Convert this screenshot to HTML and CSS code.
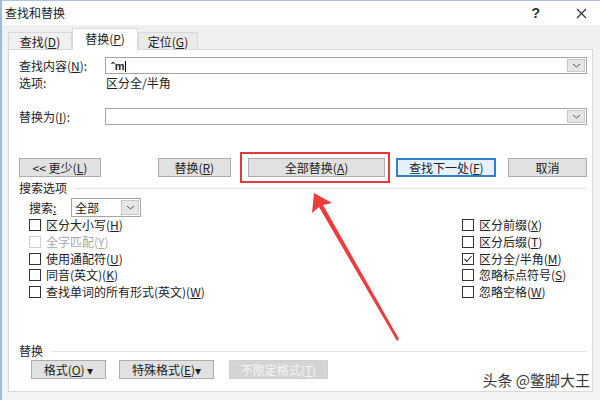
FILE: index.html
```html
<!DOCTYPE html>
<html lang="zh">

<head>
    <meta charset="UTF-8">
    <title>查找和替换</title>
    <link rel="stylesheet" href="styles.css">
</head>

<body>
    <div class="window">
        <div class="titlebar">
            <span class="title">查找和替换</span>
            <span class="help">?</span>
            <svg class="close" width="11" height="11" viewBox="0 0 11 11">
                <path d="M1 1L10 10M10 1L1 10" stroke="#333" stroke-width="1.2" fill="none" />
            </svg>
        </div>

        <div class="tabs">
            <div class="tab">查找(<u>D</u>)</div>
            <div class="tab active">替换(<u>P</u>)</div>
            <div class="tab">定位(<u>G</u>)</div>
        </div>

        <div class="panel">
            <div class="field-row">
                <span class="field-label">查找内容(<u>N</u>):</span>
                <div class="combo">
                    <span class="combo-text">ˆm<span class="caret"></span></span>
                    <span class="drop"><svg width="9" height="5" viewBox="0 0 9 5"><path d="M1 1L4.5 4L8 1" stroke="#555" fill="none" /></svg></span>
                </div>
            </div>
            <div class="options-row">
                <span class="field-label">选项:</span>
                <span>区分全/半角</span>
            </div>
            <div class="field-row replace-row">
                <span class="field-label">替换为(<u>I</u>):</span>
                <div class="combo">
                    <span class="combo-text"></span>
                    <span class="drop"><svg width="9" height="5" viewBox="0 0 9 5"><path d="M1 1L4.5 4L8 1" stroke="#555" fill="none" /></svg></span>
                </div>
            </div>

            <div class="btn-row">
                <button class="btn btn-less">&lt;&lt; 更少(<u>L</u>)</button>
                <button class="btn btn-replace">替换(<u>R</u>)</button>
                <button class="btn btn-all">全部替换(<u>A</u>)</button>
                <button class="btn btn-next">查找下一处(<u>F</u>)</button>
                <button class="btn btn-cancel">取消</button>
            </div>

            <div class="group-label"><span>搜索选项</span></div>

            <div class="search-row">
                <span class="search-label">搜索<u>:</u></span>
                <div class="select">
                    <span class="select-text">全部</span>
                    <span class="drop"><svg width="9" height="5" viewBox="0 0 9 5"><path d="M1 1L4.5 4L8 1" stroke="#555" fill="none" /></svg></span>
                </div>
            </div>

            <div class="checks">
                <div class="check-col">
                    <div class="check"><span class="box"></span>区分大小写(<u>H</u>)</div>
                    <div class="check disabled"><span class="box"></span>全字匹配(<u>Y</u>)</div>
                    <div class="check"><span class="box"></span>使用通配符(<u>U</u>)</div>
                    <div class="check"><span class="box"></span>同音(英文)(<u>K</u>)</div>
                    <div class="check"><span class="box"></span>查找单词的所有形式(英文)(<u>W</u>)</div>
                </div>
                <div class="check-col">
                    <div class="check"><span class="box"></span>区分前缀(<u>X</u>)</div>
                    <div class="check"><span class="box"></span>区分后缀(<u>T</u>)</div>
                    <div class="check"><span class="box"><svg width="10" height="10" viewBox="0 0 10 10"><path d="M1.5 5L4 7.5L8.5 2" stroke="#333" stroke-width="1.1" fill="none" /></svg></span>区分全/半角(<u>M</u>)</div>
                    <div class="check"><span class="box"></span>忽略标点符号(<u>S</u>)</div>
                    <div class="check"><span class="box"></span>忽略空格(<u>W</u>)</div>
                </div>
            </div>

            <div class="group-label bottom-group"><span>替换</span></div>

            <div class="btn-row format-row">
                <button class="btn btn-format">格式(<u>O</u>) ▾</button>
                <button class="btn btn-special">特殊格式(<u>E</u>)▾</button>
                <button class="btn btn-nolimit" disabled>不限定格式(<u>T</u>)</button>
            </div>
        </div>

        <svg class="arrow" width="600" height="400" viewBox="0 0 600 400">
            <polygon points="314,193 332,203 323,205 399,339 397,341 319,207 312,213" fill="#ef3b3b" />
        </svg>

        <div class="watermark">头条 @鳖脚大王</div>
    </div>
</body>

</html>
```

FILE: styles.css
```css
body {
    margin: 0;
    font-family: "Noto Sans CJK SC", "Liberation Sans", sans-serif;
    font-size: 12px;
    color: #222;
    background-color: #f0f0f0;
}

.window {
    position: relative;
    width: 598px;
    height: 400px;
    border-left: 2px solid #9fbadb;
    background-color: #f3f3f3;
    overflow: hidden;
}

.titlebar {
    height: 25px;
    display: flex;
    align-items: center;
    background-color: #fff;
    border-top: 1px solid #a9c4e4;
    box-sizing: border-box;
    padding-left: 3px;
}

.titlebar .title {
    flex: 1;
    line-height: 14px;
}

.titlebar .help {
    font-family: "Liberation Sans", sans-serif;
    font-size: 14px;
    font-weight: bold;
    color: #333;
    margin-right: 36px;
}

.titlebar .close {
    margin-right: 13px;
}

.tabs {
    height: 24px;
    display: flex;
    align-items: flex-end;
    padding-left: 6px;
    background-color: #f0f0f0;
}

.tab {
    height: 17px;
    line-height: 17px;
    text-align: center;
    border: 1px solid #d9d9d9;
    border-bottom: none;
    background-color: #f0f0f0;
    box-sizing: border-box;
    width: 64px;
}

.tab.active {
    height: 22px;
    line-height: 20px;
    width: 66px;
    background-color: #fff;
    margin-bottom: -1px;
    position: relative;
    z-index: 1;
}

.tab:last-child {
    width: 60px;
    background-color: #eaeaea;
}

.panel {
    height: 343px;
    margin: 0 7px 0 6px;
    border: 1px solid #d9d9d9;
    background-color: #fff;
    box-sizing: border-box;
    padding: 7px 5px 0 10px;
}

u {
    text-decoration: underline;
    text-underline-offset: 1px;
}

.field-row {
    display: flex;
    align-items: center;
    height: 17px;
}

.field-label {
    width: 86px;
    line-height: 14px;
}

.combo {
    flex: 1;
    height: 17px;
    border: 1px solid #a5a5a5;
    box-sizing: border-box;
    display: flex;
    align-items: center;
}

.combo-text {
    flex: 1;
    padding-left: 5px;
    line-height: 14px;
    font-family: "Liberation Sans", sans-serif;
    font-size: 11px;
    font-weight: bold;
}

.caret {
    display: inline-block;
    width: 1px;
    height: 11px;
    background-color: #000;
    vertical-align: middle;
    margin-left: 1px;
}

.drop {
    width: 18px;
    height: 13px;
    margin-right: 1px;
    background-color: #e6e6e6;
    border: 1px solid #c8c8c8;
    box-sizing: border-box;
    display: flex;
    align-items: center;
    justify-content: center;
}

.options-row {
    display: flex;
    align-items: center;
    height: 14px;
    margin-top: 2px;
    line-height: 14px;
}

.options-row .field-label {
    width: 87px;
}

.replace-row {
    margin-top: 18px;
}

.btn-row {
    display: flex;
    margin-top: 33px;
}

.btn {
    height: 19px;
    padding: 0;
    border: 1px solid #adadad;
    background-color: #e1e1e1;
    font-family: "Noto Sans CJK SC", "Liberation Sans", sans-serif;
    font-size: 12px;
    line-height: 16px;
    color: #222;
    box-sizing: border-box;
}

.btn-less {
    width: 82px;
}

.btn-replace {
    width: 73px;
    margin-left: 57px;
}

.btn-all {
    position: relative;
    width: 138px;
    margin-left: 17px;
}

.btn-all::after {
    content: "";
    position: absolute;
    top: -7px;
    left: -9px;
    right: -6px;
    bottom: -7px;
    border: 2px solid #e23a3f;
}

.btn-next {
    width: 100px;
    margin-left: 11px;
    border: 2px solid #2f7fd0;
    background-color: #e5f1fb;
}

.btn-cancel {
    width: 79px;
    margin-left: 12px;
}

.group-label {
    display: flex;
    align-items: center;
    height: 14px;
    margin-top: 4px;
    line-height: 14px;
}

.group-label::after {
    content: "";
    flex: 1;
    height: 1px;
    margin: 0 0 0 8px;
    background-color: #e3e3e3;
}

.search-row {
    display: flex;
    align-items: center;
    height: 19px;
    margin-top: 3px;
    padding-left: 10px;
}

.search-label {
    width: 42px;
    line-height: 14px;
}

.select {
    width: 70px;
    height: 19px;
    border: 1px solid #a5a5a5;
    box-sizing: border-box;
    display: flex;
    align-items: center;
}

.select-text {
    flex: 1;
    padding-left: 3px;
    line-height: 14px;
}

.select .drop {
    height: 15px;
}

.checks {
    display: grid;
    grid-template-columns: 433px auto;
    padding-left: 10px;
}

.check {
    display: flex;
    align-items: center;
    height: 16.7px;
    line-height: 14px;
}

.box {
    width: 12px;
    height: 12px;
    border: 1px solid #333;
    box-sizing: border-box;
    margin-right: 5px;
    display: flex;
    align-items: center;
    justify-content: center;
    background-color: #fff;
}

.check.disabled {
    color: #a8a8a8;
}

.check.disabled .box {
    border-color: #cfcfcf;
}

.bottom-group {
    margin-top: 44px;
}

.format-row {
    margin-top: 2px;
    padding-left: 12px;
}

.btn-format {
    width: 75px;
}

.btn-special {
    width: 95px;
    margin-left: 13px;
}

.btn-nolimit {
    width: 99px;
    margin-left: 15px;
    color: #f4f4f4;
    background-color: #d4d4d4;
    border-color: #cfcfcf;
}

.arrow {
    position: absolute;
    top: 0;
    left: -2px;
    pointer-events: none;
}

.watermark {
    position: absolute;
    right: 10px;
    bottom: 11px;
    font-size: 15px;
    line-height: 18px;
    color: #3a3a3a;
    text-shadow: 0 0 2px #fff, 0 0 2px #fff, 0 0 2px #fff;
}
```
